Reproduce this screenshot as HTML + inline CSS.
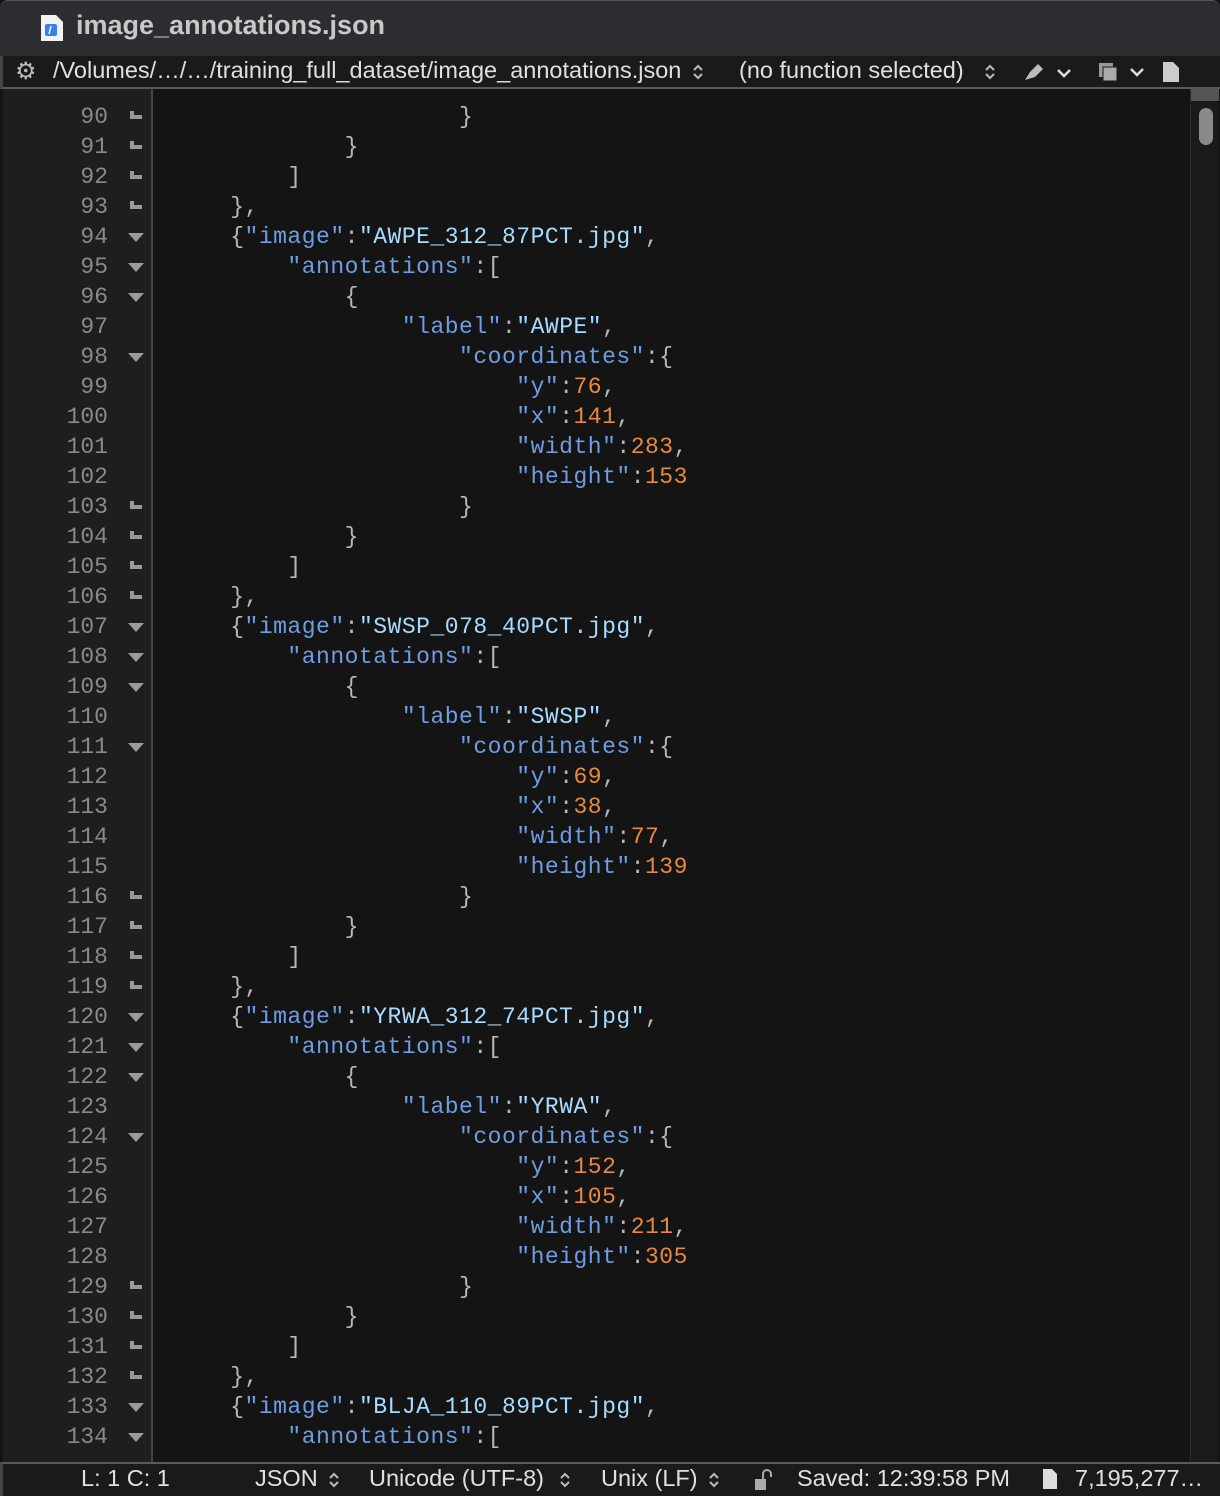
<!DOCTYPE html>
<html><head><meta charset="utf-8">
<style>
*{margin:0;padding:0;box-sizing:border-box}
body{width:1220px;height:1496px;background:#141414;position:relative;overflow:hidden;font-family:"Liberation Sans",sans-serif}
#title{position:absolute;left:0;top:0;width:1220px;height:56px;background:#2c2d30;border-top:1px solid #555;border-radius:8px 8px 0 0}
#title .t{position:absolute;left:76px;top:9px;font-size:27px;font-weight:bold;color:#c8c8c8}
#bar{position:absolute;left:0;top:56px;width:1220px;height:33px;background:#1a1a1a;border-bottom:2px solid #5a5a5a;border-left:3px solid #444;color:#e0e0e0;font-size:23.5px}
#bar span{position:absolute;top:1px}
#gut{position:absolute;left:3px;top:89px;width:150px;height:1373px;background:#1e1e1e;border-right:2px solid #444}
#sb{position:absolute;left:1190px;top:89px;width:28px;height:1373px;background:#1a1a1a;border-left:1px solid #2a2a2a}
#sb .tr{position:absolute;left:0;top:0;width:28px;height:12px;background:#555}
#sb .th{position:absolute;left:8px;top:19px;width:14px;height:37px;border-radius:7px;background:#8a8a8a}
.l{position:absolute;left:0;height:30px;width:1190px;font-family:"Liberation Mono",monospace;font-size:23px;letter-spacing:0.5px;line-height:30px;white-space:pre;margin-top:2px}
.n{position:absolute;left:40px;width:68px;text-align:right;color:#8a8a8a;letter-spacing:0}
.fo{position:absolute;left:128px;top:11px;width:0;height:0;border-left:8px solid transparent;border-right:8px solid transparent;border-top:9px solid #9a9a9a}
.fc{position:absolute;left:130px;top:9px;width:12px;height:8px;border-left:4px solid #9a9a9a;border-bottom:4px solid #9a9a9a}
.c{position:absolute;left:173px;color:#b8b8b8}
.k{color:#6f9de2}.s{color:#a8dcff}.d{color:#e8893e}
#st{position:absolute;left:0;top:1462px;width:1220px;height:34px;background:#1a1a1a;border-top:2px solid #5a5a5a;border-left:3px solid #444;color:#e0e0e0;font-size:23.5px}
#st span{position:absolute;top:1px}
.ud{position:absolute}
</style></head><body>
<div id="title">
<svg style="position:absolute;left:40px;top:13px" width="24" height="28" viewBox="0 0 24 28"><path d="M1 1h15l7 7v19H1z" fill="#f2f2f2"/><rect x="5" y="10" width="12" height="12" rx="2" fill="#3c7bf0"/><path d="M11 12l-2 8" stroke="#fff" stroke-width="1.5"/></svg>
<span class="t">image_annotations.json</span></div>
<div id="bar">
<span style="left:12px;top:1px;font-size:24px;color:#bbb">⚙</span>
<span style="left:50px">/Volumes/…/…/training_full_dataset/image_annotations.json</span>
<svg class="ud" style="left:689px;top:7px" width="12" height="18"><path d="M2 7l4-4 4 4M2 11l4 4 4-4" stroke="#bbb" stroke-width="2" fill="none"/></svg>
<span style="left:736px">(no function selected)</span>
<svg class="ud" style="left:981px;top:7px" width="12" height="18"><path d="M2 7l4-4 4 4M2 11l4 4 4-4" stroke="#bbb" stroke-width="2" fill="none"/></svg>
<svg style="position:absolute;left:1020px;top:6px" width="60" height="22"><path d="M2 18l5-8 8-8 5 5-8 8z" fill="#bbb"/><path d="M35 8l6 6 6-6" stroke="#ddd" stroke-width="2.5" fill="none"/></svg>
<svg style="position:absolute;left:1094px;top:5px" width="50" height="24"><rect x="2" y="2" width="14" height="14" fill="#999"/><rect x="6" y="6" width="14" height="14" fill="#aaa" stroke="#1a1a1a"/><path d="M34 8l6 6 6-6" stroke="#ddd" stroke-width="2.5" fill="none"/></svg>
<svg style="position:absolute;left:1158px;top:5px" width="20" height="22"><path d="M2 1h10l6 6v14H2z" fill="#ccc"/></svg>
</div>
<div id="gut"></div>
<div id="sb"><div class="tr"></div><div class="th"></div></div>

<div class="l" style="top:100px"><span class="n">90</span><span class="fc"></span><span class="c">                    }</span></div>
<div class="l" style="top:130px"><span class="n">91</span><span class="fc"></span><span class="c">            }</span></div>
<div class="l" style="top:160px"><span class="n">92</span><span class="fc"></span><span class="c">        ]</span></div>
<div class="l" style="top:190px"><span class="n">93</span><span class="fc"></span><span class="c">    },</span></div>
<div class="l" style="top:220px"><span class="n">94</span><span class="fo"></span><span class="c">    {<span class="k">"image"</span>:<span class="s">"AWPE_312_87PCT.jpg"</span>,</span></div>
<div class="l" style="top:250px"><span class="n">95</span><span class="fo"></span><span class="c">        <span class="k">"annotations"</span>:[</span></div>
<div class="l" style="top:280px"><span class="n">96</span><span class="fo"></span><span class="c">            {</span></div>
<div class="l" style="top:310px"><span class="n">97</span><span class="c">                <span class="k">"label"</span>:<span class="s">"AWPE"</span>,</span></div>
<div class="l" style="top:340px"><span class="n">98</span><span class="fo"></span><span class="c">                    <span class="k">"coordinates"</span>:{</span></div>
<div class="l" style="top:370px"><span class="n">99</span><span class="c">                        <span class="k">"y"</span>:<span class="d">76</span>,</span></div>
<div class="l" style="top:400px"><span class="n">100</span><span class="c">                        <span class="k">"x"</span>:<span class="d">141</span>,</span></div>
<div class="l" style="top:430px"><span class="n">101</span><span class="c">                        <span class="k">"width"</span>:<span class="d">283</span>,</span></div>
<div class="l" style="top:460px"><span class="n">102</span><span class="c">                        <span class="k">"height"</span>:<span class="d">153</span></span></div>
<div class="l" style="top:490px"><span class="n">103</span><span class="fc"></span><span class="c">                    }</span></div>
<div class="l" style="top:520px"><span class="n">104</span><span class="fc"></span><span class="c">            }</span></div>
<div class="l" style="top:550px"><span class="n">105</span><span class="fc"></span><span class="c">        ]</span></div>
<div class="l" style="top:580px"><span class="n">106</span><span class="fc"></span><span class="c">    },</span></div>
<div class="l" style="top:610px"><span class="n">107</span><span class="fo"></span><span class="c">    {<span class="k">"image"</span>:<span class="s">"SWSP_078_40PCT.jpg"</span>,</span></div>
<div class="l" style="top:640px"><span class="n">108</span><span class="fo"></span><span class="c">        <span class="k">"annotations"</span>:[</span></div>
<div class="l" style="top:670px"><span class="n">109</span><span class="fo"></span><span class="c">            {</span></div>
<div class="l" style="top:700px"><span class="n">110</span><span class="c">                <span class="k">"label"</span>:<span class="s">"SWSP"</span>,</span></div>
<div class="l" style="top:730px"><span class="n">111</span><span class="fo"></span><span class="c">                    <span class="k">"coordinates"</span>:{</span></div>
<div class="l" style="top:760px"><span class="n">112</span><span class="c">                        <span class="k">"y"</span>:<span class="d">69</span>,</span></div>
<div class="l" style="top:790px"><span class="n">113</span><span class="c">                        <span class="k">"x"</span>:<span class="d">38</span>,</span></div>
<div class="l" style="top:820px"><span class="n">114</span><span class="c">                        <span class="k">"width"</span>:<span class="d">77</span>,</span></div>
<div class="l" style="top:850px"><span class="n">115</span><span class="c">                        <span class="k">"height"</span>:<span class="d">139</span></span></div>
<div class="l" style="top:880px"><span class="n">116</span><span class="fc"></span><span class="c">                    }</span></div>
<div class="l" style="top:910px"><span class="n">117</span><span class="fc"></span><span class="c">            }</span></div>
<div class="l" style="top:940px"><span class="n">118</span><span class="fc"></span><span class="c">        ]</span></div>
<div class="l" style="top:970px"><span class="n">119</span><span class="fc"></span><span class="c">    },</span></div>
<div class="l" style="top:1000px"><span class="n">120</span><span class="fo"></span><span class="c">    {<span class="k">"image"</span>:<span class="s">"YRWA_312_74PCT.jpg"</span>,</span></div>
<div class="l" style="top:1030px"><span class="n">121</span><span class="fo"></span><span class="c">        <span class="k">"annotations"</span>:[</span></div>
<div class="l" style="top:1060px"><span class="n">122</span><span class="fo"></span><span class="c">            {</span></div>
<div class="l" style="top:1090px"><span class="n">123</span><span class="c">                <span class="k">"label"</span>:<span class="s">"YRWA"</span>,</span></div>
<div class="l" style="top:1120px"><span class="n">124</span><span class="fo"></span><span class="c">                    <span class="k">"coordinates"</span>:{</span></div>
<div class="l" style="top:1150px"><span class="n">125</span><span class="c">                        <span class="k">"y"</span>:<span class="d">152</span>,</span></div>
<div class="l" style="top:1180px"><span class="n">126</span><span class="c">                        <span class="k">"x"</span>:<span class="d">105</span>,</span></div>
<div class="l" style="top:1210px"><span class="n">127</span><span class="c">                        <span class="k">"width"</span>:<span class="d">211</span>,</span></div>
<div class="l" style="top:1240px"><span class="n">128</span><span class="c">                        <span class="k">"height"</span>:<span class="d">305</span></span></div>
<div class="l" style="top:1270px"><span class="n">129</span><span class="fc"></span><span class="c">                    }</span></div>
<div class="l" style="top:1300px"><span class="n">130</span><span class="fc"></span><span class="c">            }</span></div>
<div class="l" style="top:1330px"><span class="n">131</span><span class="fc"></span><span class="c">        ]</span></div>
<div class="l" style="top:1360px"><span class="n">132</span><span class="fc"></span><span class="c">    },</span></div>
<div class="l" style="top:1390px"><span class="n">133</span><span class="fo"></span><span class="c">    {<span class="k">"image"</span>:<span class="s">"BLJA_110_89PCT.jpg"</span>,</span></div>
<div class="l" style="top:1420px"><span class="n">134</span><span class="fo"></span><span class="c">        <span class="k">"annotations"</span>:[</span></div>

<div id="st">
<span style="left:78px">L: 1 C: 1</span>
<span style="left:252px">JSON</span>
<svg class="ud" style="left:325px;top:7px" width="12" height="18"><path d="M2 7l4-4 4 4M2 11l4 4 4-4" stroke="#bbb" stroke-width="2" fill="none"/></svg>
<span style="left:366px">Unicode (UTF-8)</span>
<svg class="ud" style="left:556px;top:7px" width="12" height="18"><path d="M2 7l4-4 4 4M2 11l4 4 4-4" stroke="#bbb" stroke-width="2" fill="none"/></svg>
<span style="left:598px">Unix (LF)</span>
<svg class="ud" style="left:705px;top:7px" width="12" height="18"><path d="M2 7l4-4 4 4M2 11l4 4 4-4" stroke="#bbb" stroke-width="2" fill="none"/></svg>
<svg style="position:absolute;left:750px;top:4px" width="22" height="24"><rect x="2" y="11" width="11" height="11" fill="#aaa"/><path d="M10 11V6a4 4 0 0 1 8 0v3" stroke="#aaa" stroke-width="2" fill="none"/></svg>
<span style="left:794px">Saved: 12:39:58 PM</span>
<svg style="position:absolute;left:1038px;top:4px" width="18" height="22"><path d="M2 1h9l5 5v15H2z" fill="#ddd"/></svg>
<span style="left:1072px">7,195,277…</span>
</div>
</body></html>
